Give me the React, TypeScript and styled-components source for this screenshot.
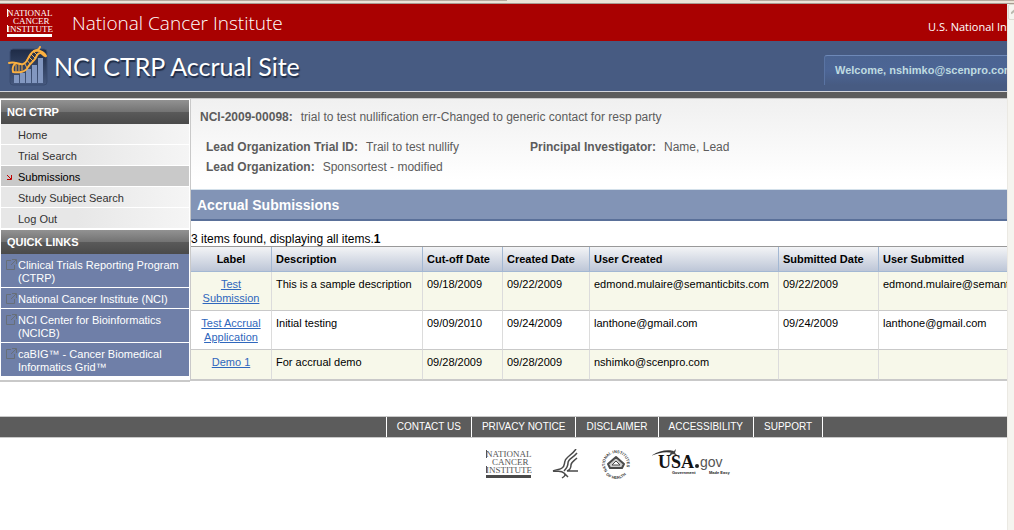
import React from "react";
import styled, { createGlobalStyle, css } from "styled-components";

const GlobalStyle = createGlobalStyle`
  * { box-sizing: border-box; }
  body {
    margin: 0;
    background: #fff;
    color: #000;
    font-family: "Liberation Sans", Arial, sans-serif;
    font-size: 11px;
  }
`;

const WindowEdge = styled.div`
  height: 4px;
  border-bottom: 1px solid #a89c92;
  background:
    linear-gradient(90deg, #b5aa9e 50%, transparent 50%, transparent 74%, #b5aa9e 74%) top / 100% 1px no-repeat,
    #ebe4d8;
`;

const Frame = styled.div`
  display: flex;
  min-height: calc(100vh - 4px);
`;

const Viewport = styled.div`
  flex: 1;
  min-width: 0;
  overflow: hidden;
`;

const Page = styled.div`
  min-width: 1209px;
`;

const ScrollTrack = styled.div`
  flex: none;
  width: 7px;
  overflow: hidden;
  background: #f5f4ef;
  border-left: 1px solid #ebe9e3;
`;

const ScrollUp = styled.button`
  display: block;
  width: 17px;
  height: 16px;
  padding: 0 0 0 2px;
  border: 1px solid #dcdbd1;
  border-radius: 2px;
  background: #f6f5f0;
  text-align: left;
  line-height: 0;
`;

const AgencyBar = styled.header`
  display: flex;
  align-items: center;
  justify-content: space-between;
  height: 37px;
  padding-left: 7px;
  background: #a90101;
  color: #fff;
`;

const AgencyName = styled.a`
  display: flex;
  align-items: center;
  gap: 19px;
  color: #fff;
  text-decoration: none;
  font: 300 19px "Open Sans", "Noto Sans", sans-serif;
`;

const ParentAgency = styled.a`
  width: 281px;
  padding-top: 8px;
  color: #fff;
  text-decoration: none;
  white-space: nowrap;
  font: 11px "Open Sans", "Noto Sans", sans-serif;
`;

const SiteBar = styled.div`
  display: flex;
  justify-content: space-between;
  height: 51px;
  padding-left: 8px;
  background: #475b82;
  border-bottom: 1px solid #d4d6dc;
`;

const SiteTitle = styled.h1`
  display: flex;
  align-items: center;
  gap: 6px;
  margin: 0;
  color: #fff;
  font: 400 25px Lato, sans-serif;
  text-shadow: 1px 2px 1px #1f2c46;
`;

const Welcome = styled.div`
  width: 385px;
  height: 30px;
  margin-top: 14px;
  padding: 8px 10px;
  border-top: 1px solid #6e89b8;
  border-left: 1px solid #5a74a3;
  border-radius: 3px 0 0 0;
  background: linear-gradient(#4b6492, #4c6595 50%, #475b82);
  color: #bfdbe0;
  font-size: 11px;
  font-weight: bold;
  line-height: 13px;
`;

const Divider = styled.div`
  height: 7px;
  background: #5c5c5c;
  border-bottom: 1px solid #c9c9c9;
`;

const Columns = styled.div`
  display: flex;
  align-items: flex-start;
`;

const Sidebar = styled.nav`
  flex: none;
  width: 190px;
  padding: 1px 1px 2px;
  border-bottom: 2px solid #c9c9c9;
`;

const MenuHeading = styled.h2`
  height: 24px;
  margin: 0;
  padding: 0 6px;
  background: linear-gradient(#929292, #747474 48%, #5a5a5a 50%, #4a4a4a);
  color: #fff;
  font-size: 11px;
  line-height: 24px;
`;

const Menu = styled.ul`
  margin: 0 0 1px;
  padding: 0;
  list-style: none;
`;

const MenuLink = styled.a<{ $kind: "page" | "current" | "external" }>`
  display: flex;
  padding: 5px 4px 2px 0;
  border-bottom: 1px solid #fff;
  color: #333;
  font-size: 11px;
  line-height: 13px;
  text-decoration: none;
  ${({ $kind }) =>
    $kind === "page"
      ? css`background: linear-gradient(90deg, #e7e7e7 40%, #f5f5f5);`
      : $kind === "current"
        ? css`background: #c9c9c9; color: #000;`
        : css`background: #6f7fa8; color: #fff;`}
`;

const MenuMark = styled.span`
  flex: none;
  width: 17px;
  padding: 0 4px;
  line-height: 0;
`;

const Main = styled.main`
  flex: 1;
  min-width: 0;
  border-left: 1px solid #c9c9c9;
`;

const Summary = styled.section`
  height: 90px;
  padding: 10px 9px;
  background: linear-gradient(#f0f0f0, #fff 90%);
  color: #5c5c5c;
  font-size: 12px;
  line-height: 16px;
`;

const Fact = styled.p`
  margin: 0;
`;

const FactName = styled.strong`
  margin-right: 8px;
`;

const FactGrid = styled.div`
  display: grid;
  grid-template-columns: 324px 1fr;
  row-gap: 4px;
  padding: 14px 6px;
`;

const SectionTitle = styled.h2`
  height: 32px;
  margin: 0;
  padding: 0 6px;
  border-top: 1px solid #d3e0ea;
  border-bottom: 2px solid #5a7099;
  background: #8294b6;
  color: #fff;
  font-size: 14px;
  line-height: 30px;
`;

const Count = styled.p`
  margin: 11px 0 0;
  font-size: 12px;
  line-height: 14px;
`;

const Table = styled.table`
  width: 100%;
  table-layout: fixed;
  border-collapse: separate;
  border-spacing: 0;
  border-top: 1px solid #999;
  border-bottom: 1px solid #c9c9c9;
  font-size: 11px;
`;

const HeadCell = styled.th<{ $center?: boolean }>`
  height: 25px;
  padding: 0 4px;
  border-right: 1px solid #a3b8d3;
  border-bottom: 1px solid #a3b8d3;
  background: linear-gradient(#f3f4f6, #bdc6d7);
  text-align: ${({ $center }) => ($center ? "center" : "left")};
  white-space: nowrap;
`;

const Row = styled.tr`
  background: #fff;
  &:nth-child(odd) { background: #f7f8ea; }
`;

const Cell = styled.td<{ $center?: boolean }>`
  height: 30px;
  padding: 5px 4px;
  border-right: 1px solid #dcdcdc;
  border-bottom: 1px solid #c9c9c9;
  line-height: 14px;
  vertical-align: top;
  text-align: ${({ $center }) => ($center ? "center" : "left")};
`;

const RecordLink = styled.a`
  color: #2f67bd;
`;

const Footer = styled.footer`
  margin-top: 34px;
`;

const FooterBar = styled.nav`
  display: flex;
  justify-content: center;
  height: 22px;
  border-top: 1px solid #c9c9c9;
  border-bottom: 1px solid #c9c9c9;
  background: #5c5c5c;
`;

const FooterLink = styled.a`
  padding: 0 10px;
  border-right: 1px solid #fff;
  color: #fff;
  font-size: 10px;
  line-height: 20px;
  text-decoration: none;
  text-transform: uppercase;
  &:first-child { border-left: 1px solid #fff; }
`;

const Logos = styled.div`
  display: flex;
  justify-content: center;
  gap: 20px;
  padding: 11px 0 0 12px;
`;

const LogoLink = styled.a`
  line-height: 0;
`;

function NciLogo({ color, bar }: { color: string; bar: string }) {
  return (
    <svg width="46" height="30" viewBox="0 0 46 30" role="img" aria-label="National Cancer Institute">
      <g fill={color} fontFamily="Liberation Serif, serif" fontSize="9">
        <text x="0" y="8">NATIONAL</text>
        <text x="6" y="16">CANCER</text>
        <text x="0" y="24">INSTITUTE</text>
      </g>
      <path d="M0.500 1V9M0.500 17V24" stroke={color} strokeWidth="1" />
      <rect x="0" y="26" width="45" height="3" fill={bar} />
    </svg>
  );
}

function AccrualIcon() {
  return (
    <svg width="40" height="42" viewBox="0 0 40 42" aria-hidden="true">
      <defs>
        <linearGradient id="tile" x1="0" y1="0" x2="0" y2="1">
          <stop offset="0" stopColor="#1e2b46" />
          <stop offset="1" stopColor="#46597f" />
        </linearGradient>
      </defs>
      <rect x="2" y="4" width="37" height="36" rx="3" fill="url(#tile)" stroke="#3a4c70" />
      <path d="M6 30h5v8H6zM12 28h5v10h-5zM18 24h5v14h-5zM24 20h5v18h-5zM30 13h5v25h-5z" fill="#8297c0" />
      <g fill="none" stroke="#fbb040" strokeLinecap="round">
        <path d="M1 18C7 16 10 20 15 19C21 17 19 10 26 6C29 4 31 6 32 2" strokeWidth="2" />
        <path d="M5 27C4 23 5 20 8 18M5 27C11 28 18 27 20 22C22 18 25 17 27 14C29 11 29 8 32 8C35 8 35 12 38 11M26 6C32 5 36 7 38 11" strokeWidth="2" />
        <path d="M8 20v6M11 20v6M14 20v5M17 19l2 4M19 15l3 4M21 12l4 4M23 9l4 4M26 7l3 3" strokeWidth="1" />
      </g>
    </svg>
  );
}

function CurrentMark() {
  return (
    <svg width="7" height="13" viewBox="0 0 7 13" aria-hidden="true">
      <path d="M2 4L6 8M6.500 4V8.500H2" fill="none" stroke="#c00000" strokeWidth="1" />
    </svg>
  );
}

function ExternalMark() {
  return (
    <svg width="13" height="13" viewBox="0 0 13 13" aria-hidden="true">
      <path d="M6 1.500H1.500V10.500H9.500V6M7 0.500H11.500V5M11 1L6 6" fill="none" stroke="#676f78" />
    </svg>
  );
}

function HhsLogo() {
  return (
    <svg width="28" height="32" viewBox="0 0 28 32" role="img" aria-label="Health and Human Services">
      <g fill="none" stroke="#4a4a4a" strokeWidth="1.500">
        <path d="M24 0C20 6 14 8 13 12C12 15 13 17 10 19C8 21 6 20 1 22" />
        <path d="M25 4C21 9 16 10 16 14C16 17 15 19 12 22" />
        <path d="M25 9C22 12 19 13 19 16C19 19 18 21 15 22H26" />
        <path d="M1 22C6 23 9 21 12 24C14 26 13 27 10 29M12 24L16 28" />
      </g>
    </svg>
  );
}

function NihLogo() {
  return (
    <svg width="32" height="32" viewBox="0 0 32 32" role="img" aria-label="National Institutes of Health">
      <defs>
        <path id="ringTop" d="M7.500 22A11 11 0 1 1 24.500 22" />
        <path id="ringBottom" d="M2 16A14 14 0 0 0 30 16" />
      </defs>
      <g fill="#333" fontFamily="Liberation Sans, sans-serif" fontSize="4" fontWeight="bold">
        <text><textPath href="#ringTop">NATIONAL INSTITUTES</textPath></text>
        <text textAnchor="middle"><textPath href="#ringBottom" startOffset="50%">OF HEALTH</textPath></text>
      </g>
      <path d="M16 8L24 15L22 19H10L8 15Z" fill="#ccc" stroke="#4a4a4a" strokeWidth="2" strokeLinejoin="round" />
      <path d="M16 12L20 16H12Z" fill="#fff" stroke="#4a4a4a" />
    </svg>
  );
}

function UsaGovLogo() {
  return (
    <svg width="84" height="32" viewBox="0 0 84 32" role="img" aria-label="USA.gov, Government Made Easy">
      <path d="M-3 8C5 3 13 0 22 2L21 4C13 2 5 4 -3 8Z" fill="#333" />
      <path d="M17 1L21 3L24 0L23 4L26 7L21 5L17 7L19 3Z" fill="#444" />
      <text x="6" y="19" fontFamily="Liberation Serif, serif" fontWeight="bold" fontSize="18" fill="#111">USA</text>
      <circle cx="45" cy="17" r="2" fill="#222" />
      <text x="48" y="18" fontFamily="Liberation Sans, sans-serif" fontSize="14" fill="#555">gov</text>
      <g fontFamily="Liberation Sans, sans-serif" fontWeight="bold" fontSize="4" fill="#222">
        <text x="20" y="25">Government</text>
        <text x="57" y="25">Made Easy</text>
      </g>
    </svg>
  );
}

const pages = ["Home", "Trial Search", "Submissions", "Study Subject Search", "Log Out"];
const currentPage = "Submissions";
const quickLinks = [
  "Clinical Trials Reporting Program (CTRP)",
  "National Cancer Institute (NCI)",
  "NCI Center for Bioinformatics (NCICB)",
  "caBIG™ - Cancer Biomedical Informatics Grid™",
];

const columns = [
  { name: "Label", width: 81 },
  { name: "Description", width: 151 },
  { name: "Cut-off Date", width: 80 },
  { name: "Created Date", width: 87 },
  { name: "User Created", width: 189 },
  { name: "Submitted Date", width: 100 },
  { name: "User Submitted" },
];

const submissions = [
  ["Test Submission", "This is a sample description", "09/18/2009", "09/22/2009", "edmond.mulaire@semanticbits.com", "09/22/2009", "edmond.mulaire@semanticbits.com"],
  ["Test Accrual Application", "Initial testing", "09/09/2010", "09/24/2009", "lanthone@gmail.com", "09/24/2009", "lanthone@gmail.com"],
  ["Demo 1", "For accrual demo", "09/28/2009", "09/28/2009", "nshimko@scenpro.com", "", ""],
];

const footerLinks = ["Contact Us", "Privacy Notice", "Disclaimer", "Accessibility", "Support"];

export default function App() {
  return (
    <>
      <GlobalStyle />
      <WindowEdge />
      <Frame>
        <Viewport>
          <Page>
            <AgencyBar>
              <AgencyName href="#nci">
                <NciLogo color="#fff" bar="#fff" />
                National Cancer Institute
              </AgencyName>
              <ParentAgency href="#nih">U.S. National Institutes</ParentAgency>
            </AgencyBar>
            <SiteBar>
              <SiteTitle>
                <AccrualIcon />
                NCI CTRP Accrual Site
              </SiteTitle>
              <Welcome>Welcome, nshimko@scenpro.com</Welcome>
            </SiteBar>
            <Divider />
            <Columns>
              <Sidebar>
                <MenuHeading>NCI CTRP</MenuHeading>
                <Menu>
                  {pages.map((page) => (
                    <li key={page}>
                      <MenuLink href="#page" $kind={page === currentPage ? "current" : "page"}>
                        <MenuMark>{page === currentPage && <CurrentMark />}</MenuMark>
                        {page}
                      </MenuLink>
                    </li>
                  ))}
                </Menu>
                <MenuHeading>QUICK LINKS</MenuHeading>
                <Menu>
                  {quickLinks.map((link) => (
                    <li key={link}>
                      <MenuLink href="#external" $kind="external">
                        <MenuMark><ExternalMark /></MenuMark>
                        {link}
                      </MenuLink>
                    </li>
                  ))}
                </Menu>
              </Sidebar>
              <Main>
                <Summary>
                  <Fact>
                    <FactName>NCI-2009-00098:</FactName>
                    trial to test nullification err-Changed to generic contact for resp party
                  </Fact>
                  <FactGrid>
                    <Fact><FactName>Lead Organization Trial ID:</FactName>Trail to test nullify</Fact>
                    <Fact><FactName>Principal Investigator:</FactName>Name, Lead</Fact>
                    <Fact><FactName>Lead Organization:</FactName>Sponsortest - modified</Fact>
                  </FactGrid>
                </Summary>
                <SectionTitle>Accrual Submissions</SectionTitle>
                <Count>3 items found, displaying all items.<strong>1</strong></Count>
                <Table>
                  <colgroup>
                    {columns.map(({ name, width }) => <col key={name} width={width} />)}
                  </colgroup>
                  <thead>
                    <tr>
                      {columns.map(({ name }, i) => (
                        <HeadCell key={name} scope="col" $center={i === 0}>{name}</HeadCell>
                      ))}
                    </tr>
                  </thead>
                  <tbody>
                    {submissions.map((row) => (
                      <Row key={row[0]}>
                        {row.map((value, i) => (
                          <Cell key={columns[i].name} $center={i === 0}>
                            {i === 0 ? <RecordLink href="#submission">{value}</RecordLink> : value}
                          </Cell>
                        ))}
                      </Row>
                    ))}
                  </tbody>
                </Table>
              </Main>
            </Columns>
            <Footer>
              <FooterBar>
                {footerLinks.map((link) => <FooterLink key={link} href="#footer">{link}</FooterLink>)}
              </FooterBar>
              <Logos>
                <LogoLink href="#nci"><NciLogo color="#555" bar="#4a4a4a" /></LogoLink>
                <LogoLink href="#hhs"><HhsLogo /></LogoLink>
                <LogoLink href="#nih"><NihLogo /></LogoLink>
                <LogoLink href="#usa"><UsaGovLogo /></LogoLink>
              </Logos>
            </Footer>
          </Page>
        </Viewport>
        <ScrollTrack>
          <ScrollUp aria-label="Scroll up">
            <svg width="8" height="6" viewBox="0 0 8 6" aria-hidden="true">
              <path d="M0 4.500L4 1L8 4.500" fill="none" stroke="#b9b8ae" strokeWidth="2" />
            </svg>
          </ScrollUp>
        </ScrollTrack>
      </Frame>
    </>
  );
}
